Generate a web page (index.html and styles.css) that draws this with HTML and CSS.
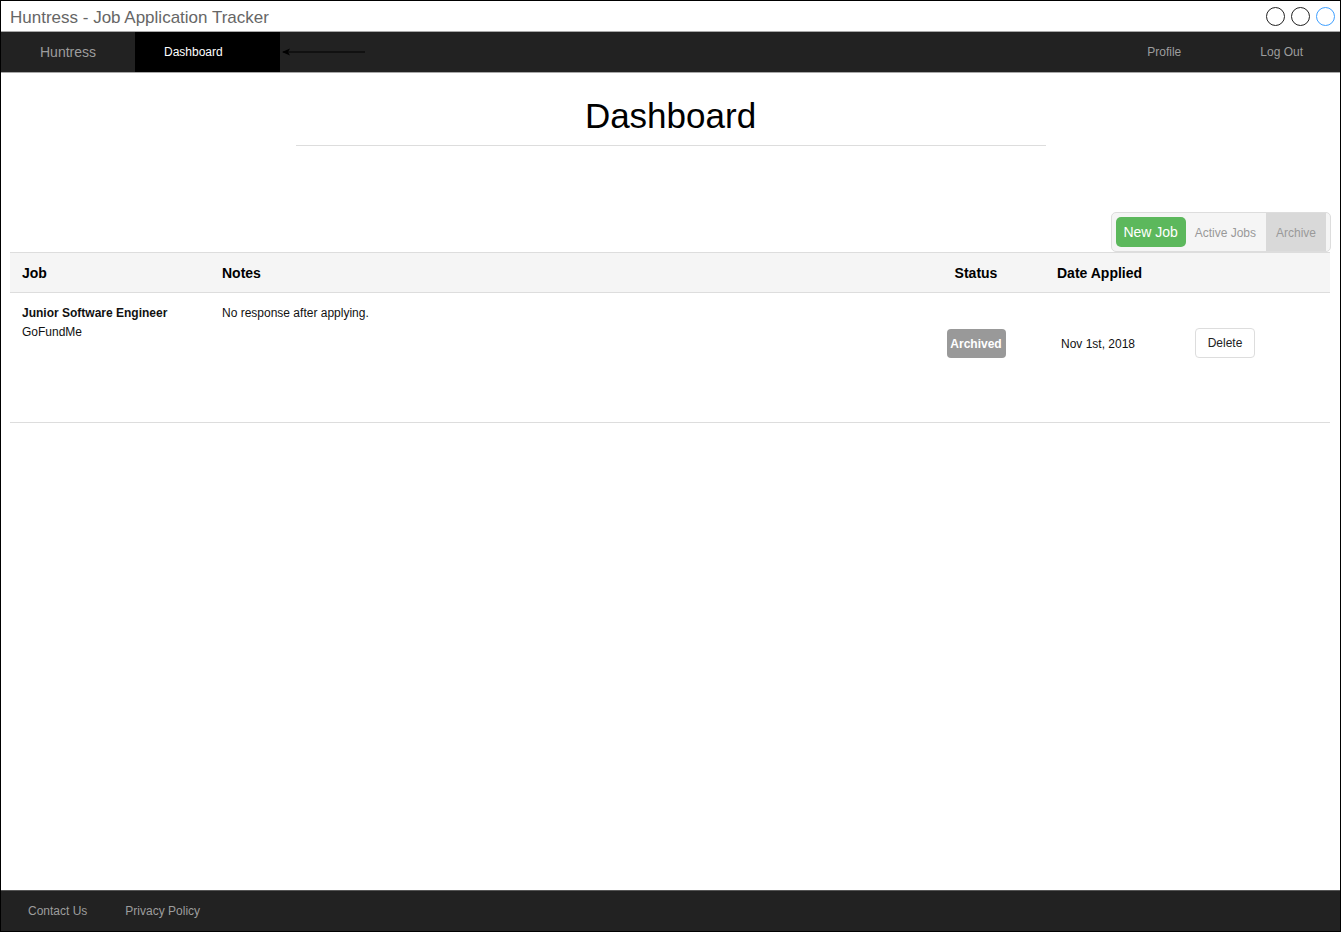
FILE: index.html
```html
<!DOCTYPE html>
<html lang="en">
<head>
<meta charset="utf-8">
<title>Huntress - Job Application Tracker</title>
<link rel="stylesheet" href="styles.css">
</head>
<body>
<div class="window">
  <div class="titlebar">
    <span class="title">Huntress - Job Application Tracker</span>
    <div class="controls">
      <span class="dot"></span>
      <span class="dot"></span>
      <span class="dot dot-blue"></span>
    </div>
  </div>
  <nav class="navbar">
    <a class="brand">Huntress</a>
    <a class="nav-active">Dashboard</a>
    <svg class="arrow" width="86" height="10" viewBox="0 0 86 10">
      <line x1="2" y1="5" x2="84" y2="5" stroke="#000" stroke-width="1"/>
      <path d="M1 5 L9 1.5 L7 5 L9 8.5 Z" fill="#000"/>
    </svg>
    <div class="nav-right">
      <a class="nav-link nav-profile">Profile</a>
      <a class="nav-link nav-logout">Log Out</a>
    </div>
  </nav>
  <main class="main">
    <div class="heading">
      <h1>Dashboard</h1>
    </div>
    <div class="toolbar">
      <div class="btn-group">
        <button class="btn-new">New Job</button>
        <button class="btn-tab">Active Jobs</button>
        <button class="btn-tab btn-tab-active">Archive</button>
      </div>
    </div>
    <div class="table">
      <div class="thead">
        <div class="cell c-job">Job</div>
        <div class="cell c-notes">Notes</div>
        <div class="cell c-status">Status</div>
        <div class="cell c-date">Date Applied</div>
        <div class="cell c-action"></div>
      </div>
      <div class="trow">
        <div class="cell c-job">
          <div class="job-title">Junior Software Engineer</div>
          <div class="job-company">GoFundMe</div>
        </div>
        <div class="cell c-notes">No response after applying.</div>
        <div class="cell c-status mid"><span class="badge">Archived</span></div>
        <div class="cell c-date mid"><span class="date">Nov 1st, 2018</span></div>
        <div class="cell c-action mid"><button class="btn-delete">Delete</button></div>
      </div>
    </div>
  </main>
  <footer class="footer">
    <a class="foot-link foot-contact">Contact Us</a>
    <a class="foot-link">Privacy Policy</a>
  </footer>
</div>
</body>
</html>
```

FILE: styles.css
```css
* { box-sizing: border-box; }
html, body { margin: 0; padding: 0; }
body {
  font-family: "Liberation Sans", Arial, Helvetica, sans-serif;
  color: #000;
  background: #fff;
}
.window {
  width: 1341px;
  height: 932px;
  border: 1px solid #000;
  display: flex;
  flex-direction: column;
  overflow: hidden;
}
.titlebar {
  height: 30px;
  display: flex;
  align-items: center;
  justify-content: space-between;
  padding: 0 5px 0 9px;
}
.title {
  font-size: 17px;
  color: #666;
  padding-top: 3px;
}
.controls {
  display: flex;
  gap: 6px;
  padding-top: 1px;
}
.dot {
  width: 19px;
  height: 19px;
  border-radius: 50%;
  border: 1px solid #222;
}
.dot-blue { border-color: #3fa0ff; }

.navbar {
  height: 42px;
  background: #222;
  border-top: 1px solid #a8a8a8;
  border-bottom: 1px solid #a8a8a8;
  display: flex;
  align-items: stretch;
}
.navbar a { display: flex; align-items: center; text-decoration: none; }
.brand {
  padding: 0 39px;
  width: 134px;
  font-size: 14px;
  color: #9d9d9d;
}
.nav-active {
  width: 145px;
  padding-left: 29px;
  background: #000;
  color: #fff;
  font-size: 12px;
}
.arrow { align-self: center; margin-left: 1px; }
.nav-right {
  margin-left: auto;
  display: flex;
  padding-right: 37px;
}
.nav-link { font-size: 12px; color: #9d9d9d; }
.nav-profile { padding: 0 40px; }
.nav-logout { padding-left: 39px; }

.main {
  flex: 1;
  padding: 0 9px 0 9px;
}
.heading {
  width: 750px;
  margin: 23px auto 0;
  border-bottom: 1px solid #ddd;
  padding-bottom: 9px;
  text-align: center;
}
h1 {
  margin: 0;
  font-size: 35px;
  font-weight: normal;
  line-height: 40px;
}
.toolbar {
  margin-top: 66px;
  display: flex;
  justify-content: flex-end;
}
.btn-group {
  display: flex;
  align-items: stretch;
  height: 40px;
  padding: 0 4px;
  border: 1px solid #ddd;
  border-radius: 5px;
  background: #f5f5f5;
}
.btn-group button {
  font-family: inherit;
  border: none;
  margin: 0;
}
.btn-new {
  align-self: center;
  height: 30px;
  width: 70px;
  background: #5cb85c;
  color: #fff;
  font-size: 14px;
  border-radius: 5px;
  padding: 0;
}
.btn-tab {
  background: transparent;
  color: #999;
  font-size: 12px;
  padding: 1px 10px 0 9px;
}
.btn-tab-active {
  background: #d9d9d9;
  padding: 1px 10px 0;
}

.table { width: 1320px; }
.thead, .trow {
  display: grid;
  grid-template-columns: 200px 726px 80px 169px 145px;
}
.thead {
  height: 41px;
  background: #f5f5f5;
  border-top: 1px solid #ddd;
  border-bottom: 1px solid #ddd;
  font-size: 14px;
  font-weight: bold;
  align-items: center;
}
.thead .c-job { padding-left: 12px; }
.thead .c-notes { padding-left: 12px; }
.thead .c-status { text-align: center; }
.thead .c-date { padding-left: 41px; }
.trow {
  height: 130px;
  border-bottom: 1px solid #ddd;
  font-size: 12px;
  color: #111;
}
.trow .c-job { padding: 13px 0 0 12px; }
.trow .c-notes { padding: 13px 0 0 12px; }
.job-title { font-weight: bold; line-height: 14px; }
.job-company { line-height: 14px; margin-top: 5px; }
.trow .mid { padding-top: 36px; }
.trow .c-status { display: flex; justify-content: center; align-items: flex-start; }
.badge {
  display: inline-flex;
  align-items: center;
  justify-content: center;
  width: 59px;
  height: 29px;
  background: #999;
  color: #fff;
  font-weight: bold;
  border-radius: 4px;
}
.trow .c-date { padding-left: 45px; }
.date { display: inline-flex; align-items: center; height: 29px; }
.trow .c-action { padding-left: 10px; padding-top: 35px; }
.btn-delete {
  width: 60px;
  height: 30px;
  background: #fff;
  border: 1px solid #ddd;
  border-radius: 4px;
  font-family: inherit;
  font-size: 12px;
  color: #222;
  padding: 0;
}

.footer {
  height: 41px;
  background: #222;
  border-top: 1px solid #555;
  display: flex;
  align-items: center;
  padding-left: 27px;
  gap: 38px;
}
.foot-link {
  font-size: 12px;
  color: #9d9d9d;
  text-decoration: none;
}
```
